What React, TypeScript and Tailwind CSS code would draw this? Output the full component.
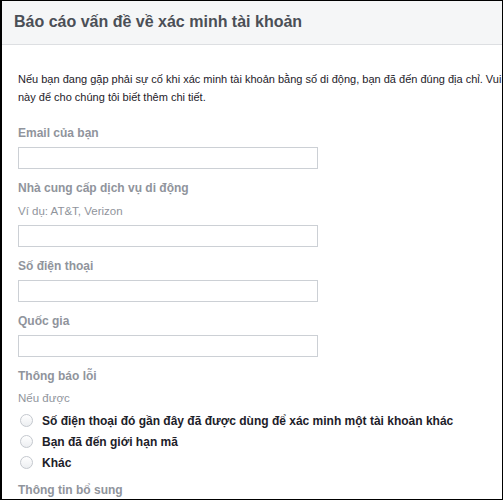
const font = { fontFamily: '"Liberation Sans", Arial, sans-serif' };

const Field = ({ label, hint, first }: { label: string; hint?: string; first?: boolean }) => {
  return (
    <div className={first ? "" : "mt-[11px]"}>
      <div className="h-4 leading-4 text-[12px] font-bold text-[#90949c]">{label}</div>
      {hint && (
        <div className="mt-[7px] h-4 leading-4 text-[11.5px] text-[#90949c]">{hint}</div>
      )}
      <div className="mt-[6px] h-[22px] w-[300px] border border-[#ccd0d5] bg-white" />
    </div>
  );
};

const Radio = ({ text }: { text: string }) => {
  return (
    <div className="flex h-[21px] items-center pl-[2px]">
      <span className="h-[13px] w-[13px] rounded-full border border-[#c4c8ce] bg-gradient-to-b from-white to-[#eceef1]" />
      <span className="ml-[9px] text-[12px] font-bold text-[#1d2129] whitespace-nowrap">{text}</span>
    </div>
  );
};

export default function App() {
  return (
    <div
      style={font}
      className="h-[500px] w-[503px] overflow-hidden border-t border-r border-b border-l-2 border-black bg-white"
    >
      {/* Header */}
      <div className="flex h-[44px] items-center border-b border-[#dddfe2] bg-[#f5f6f7] pl-[12px] pb-[2px]">
        <h1 className="text-[16px] font-bold text-[#4b4f56] whitespace-nowrap">
          Báo cáo vấn đề về xác minh tài khoản
        </h1>
      </div>

      {/* Body */}
      <div className="pl-[16px] pt-[25px]">
        <div className="text-[11px] leading-[18px] text-[#1d2129] whitespace-nowrap">
          <div>
            Nếu bạn đang gặp phải sự cố khi xác minh tài khoản bằng số di động, bạn đã đến đúng địa chỉ. Vui lòng sử dụng biểu mẫu
          </div>
          <div>này để cho chúng tôi biết thêm chi tiết.</div>
        </div>

        <div className="mt-[19px]">
          <Field label="Email của bạn" first />
          <Field label="Nhà cung cấp dịch vụ di động" hint="Ví dụ: AT&T, Verizon" />
          <Field label="Số điện thoại" />
          <Field label="Quốc gia" />
        </div>

        <div className="mt-[11px]">
          <div className="h-4 leading-4 text-[12px] font-bold text-[#90949c]">Thông báo lỗi</div>
          <div className="mt-[6px] h-4 leading-4 text-[11.5px] text-[#90949c]">Nếu được</div>
          <div className="mt-[4px]">
            <Radio text="Số điện thoại đó gần đây đã được dùng để xác minh một tài khoản khác" />
            <Radio text="Bạn đã đến giới hạn mã" />
            <Radio text="Khác" />
          </div>
          <div className="mt-[9px] h-4 leading-4 text-[12px] font-bold text-[#90949c]">Thông tin bổ sung</div>
        </div>
      </div>
    </div>
  );
}
